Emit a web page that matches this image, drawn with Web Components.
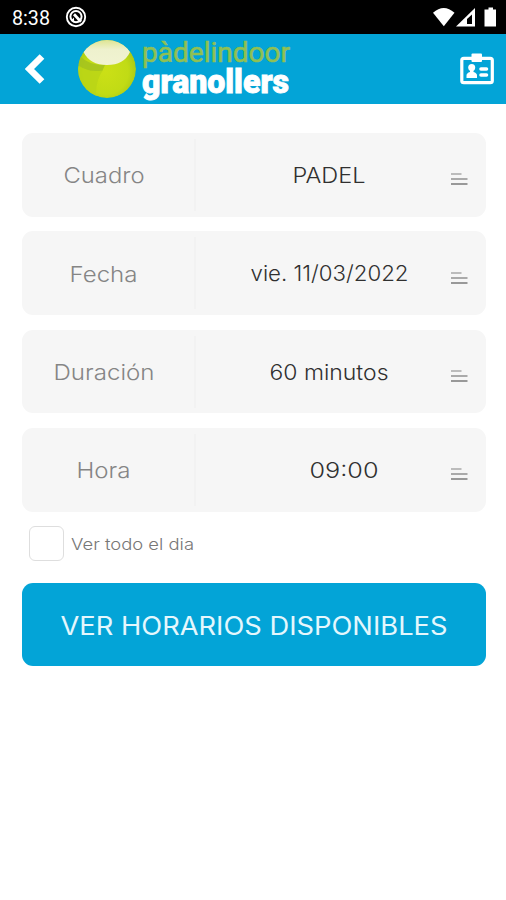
<!DOCTYPE html>
<html lang="es">
<head>
<meta charset="utf-8">
<title>Pàdel Indoor Granollers</title>
<style>
html,body{margin:0;background:#fff;height:900px;overflow:hidden;font-family:Inter,"Open Sans",sans-serif}
</style>
</head>
<body>
<booking-screen></booking-screen>
<script>
const define = (name, html) => {
  const t = document.createElement('template');
  t.innerHTML = html;
  customElements.define(name, class extends HTMLElement {
    constructor() {
      super();
      this.attachShadow({mode: 'open'}).appendChild(t.content.cloneNode(true));
    }
  });
};

/* One line of text set to an exact advance width. */
customElements.define('fit-text', class extends HTMLElement {
  connectedCallback() {
    const w = +this.getAttribute('w'), s = +this.getAttribute('size');
    const root = this.shadowRoot || this.attachShadow({mode: 'open'});
    const h = Math.round(s * 1.4), base = Math.round(s * 1.05);
    root.innerHTML = `<style>:host{display:block;flex:none;width:${w}px;height:${h}px}
      svg{display:block;overflow:visible}</style>
      <svg width="${w}" height="${h}"><text x="0" y="${base}" font-size="${s}" fill="currentColor"
      textLength="${w}" lengthAdjust="spacingAndGlyphs"></text></svg>`;
    root.querySelector('text').textContent = this.getAttribute('text');
  }
});

define('status-bar', `<style>
:host{display:flex;box-sizing:border-box;height:34px;background:#000;color:#fff;align-items:center;padding:0 9px 0 12px;font-family:Roboto,sans-serif}
.clock{margin-top:2px;font-weight:400;font-family:Roboto,sans-serif}
.app{margin:0 auto 0 15px}
svg{display:block}
</style>
<fit-text class="clock" w="38" size="19.500" text="8:38"></fit-text>
<svg class="app" width="22" height="22" viewBox="0 0 22 22" fill="none" stroke="#fff"><circle cx="11" cy="11" r="9.2" stroke-width="1.9"/><circle cx="11" cy="10.6" r="5.6" stroke-width="2"/><path d="M9 8.200l7 7.500" stroke-width="2.800"/><path d="M6 14.5l3-3v4.5z" fill="#fff" stroke="none"/></svg>
<svg width="64" height="22" viewBox="0 0 64 22"><path d="M0 6.8Q10.700 -2.800 21.500 6.800L10.800 20.300z" fill="#fff"/><path d="M23 20.500L42 2v18.500z" fill="#fff"/><path d="M34 13L39 8.500v9.500h-5z" fill="#000"/><path d="M55.500 1.500h4.500v2h3v17H51.500v-17h4z" fill="#fff"/></svg>`);

define('club-logo', `<style>
:host{display:flex;width:214px;height:60px}
svg{display:block;overflow:visible}
text{font-family:Roboto,"Liberation Sans",sans-serif}
</style>
<svg width="214" height="60" viewBox="0 0 214 60">
<defs><radialGradient id="g" cx=".48" cy=".55" r=".55"><stop offset="0" stop-color="#cbe016"/><stop offset=".7" stop-color="#c1db15"/><stop offset="1" stop-color="#a9c914"/></radialGradient>
<linearGradient id="h" x1="0" y1="0" x2="0" y2="1"><stop offset="0" stop-color="#dde38c"/><stop offset=".4" stop-color="#eef1cd"/><stop offset="1" stop-color="#f1f3d2"/></linearGradient>
<clipPath id="c"><circle cx="29" cy="30" r="29"/></clipPath></defs>
<g clip-path="url(#c)"><circle cx="29" cy="30" r="29" fill="url(#g)"/>
<path d="M0 27Q10 34 25 31Q17 42 18 60H0z" fill="#b9d416" opacity=".8"/>
<path d="M2 17Q10 26 27 26L24.500 31.500Q10 34 0 26z" fill="#a3c21e" opacity=".85"/>
<path d="M5.500 13Q12 26 29 26Q46 26 52 13Q44 0 29 0Q13 0 5.500 13z" fill="url(#h)"/></g>
<text x="64" y="23" font-size="28" fill="#8fc053" stroke="#8fc053" stroke-width=".6" textLength="148" lengthAdjust="spacingAndGlyphs">pàdelindoor</text>
<text x="64" y="54" font-size="34" font-weight="900" fill="#fff" stroke="#fff" stroke-width=".9" textLength="147" lengthAdjust="spacingAndGlyphs">granollers</text>
</svg>`);

define('app-header', `<style>
:host{display:flex;box-sizing:border-box;height:70px;background:#03a4d7;align-items:center;padding:0 11px 0 25px}
svg{display:block}
club-logo{margin:0 auto 0 33px}
</style>
<svg width="20" height="30" viewBox="0 0 20 30"><path d="M17 2.500L4.500 15L17 27.500" fill="none" stroke="#fff" stroke-width="6.600"/></svg>
<club-logo></club-logo>
<svg width="36" height="34" viewBox="0 0 36 34"><rect x="2.800" y="6.300" width="30.500" height="24.400" rx="2" fill="none" stroke="#fff" stroke-width="3.200"/><rect x="12.500" y="1.500" width="10.500" height="8.500" rx="1" fill="#fff"/><circle cx="12.700" cy="15.500" r="3.500" fill="#fff"/><path d="M7.500 26v-2.500q0-2.500 3.500-3.500v-3h3.500v3q3.500 1 3.500 3.500v2.500z" fill="#fff"/><path d="M22 17H27.500M22 23H27.500" stroke="#fff" stroke-width="3.600" stroke-linecap="round"/></svg>`);

define('form-row', `<style>
:host{display:grid;grid-template-columns:174px 1fr 35px;align-items:center;height:83.600px;background:#f6f6f6;border-radius:11px;overflow:hidden}
.label{display:flex;align-items:center;justify-content:center;height:72px;border-right:2px solid #f2f2f2;box-sizing:border-box;color:#858585}
.label ::slotted(*){transform:translate(-4.500px,.8px)}
.value{display:flex;justify-content:center;color:#303030;padding-left:12px}
.value ::slotted(*){transform:translate(-.5px,.4px)}
svg{display:block;margin-top:9px}
</style>
<div class="label"><slot name="label"></slot></div><div class="value"><slot></slot></div>
<svg width="17" height="14" viewBox="0 0 17 14"><path d="M0 2h10.500" stroke="#bcbcbc" stroke-width="2"/><path d="M0 7h16.500" stroke="#aaa" stroke-width="2"/><path d="M0 12h16.500" stroke="#999" stroke-width="2"/></svg>`);

define('check-option', `<style>
:host{display:flex;align-items:center;gap:8px;height:35px;margin:14px 0 0 6.500px;color:#777}
i{box-sizing:border-box;width:35px;height:35px;border:1.500px solid #dedede;border-radius:6px;background:#fff}
::slotted(*){transform:translate(-1px,1px)}
</style><i></i><slot></slot>`);

define('action-button', `<style>
:host{display:flex;align-items:center;justify-content:center;height:83.500px;margin-top:22px;border-radius:11px;background:#03a4d7;color:#e4f7fd}
::slotted(*){transform:translate(-.5px,1.500px)}
</style><slot></slot>`);

define('booking-screen', `<style>
:host{display:block;width:506px}
main{padding:29px 20px 0 22px}
.rows{display:grid;gap:14.800px}
fit-text{font-weight:330}
form-row fit-text[slot],check-option fit-text{font-weight:360}
action-button fit-text{font-weight:400}
</style>
<status-bar></status-bar><app-header></app-header>
<main><div class="rows">
<form-row><fit-text slot="label" w="81" size="22" text="Cuadro"></fit-text><fit-text w="73" size="21.500" text="PADEL"></fit-text></form-row>
<form-row><fit-text slot="label" w="68" size="22" text="Fecha"></fit-text><fit-text w="158" size="21.500" text="vie. 11/03/2022"></fit-text></form-row>
<form-row><fit-text slot="label" w="101" size="22" text="Duración"></fit-text><fit-text w="119" size="21.500" text="60 minutos"></fit-text></form-row>
<form-row><fit-text slot="label" w="54" size="22" text="Hora"></fit-text><fit-text style="margin-left:29px" w="69" size="21.500" text="09:00"></fit-text></form-row>
</div>
<check-option><fit-text w="123" size="16.500" text="Ver todo el dia"></fit-text></check-option>
<action-button><fit-text w="387" size="25" text="VER HORARIOS DISPONIBLES"></fit-text></action-button>
</main>`);
</script>
</body>
</html>
